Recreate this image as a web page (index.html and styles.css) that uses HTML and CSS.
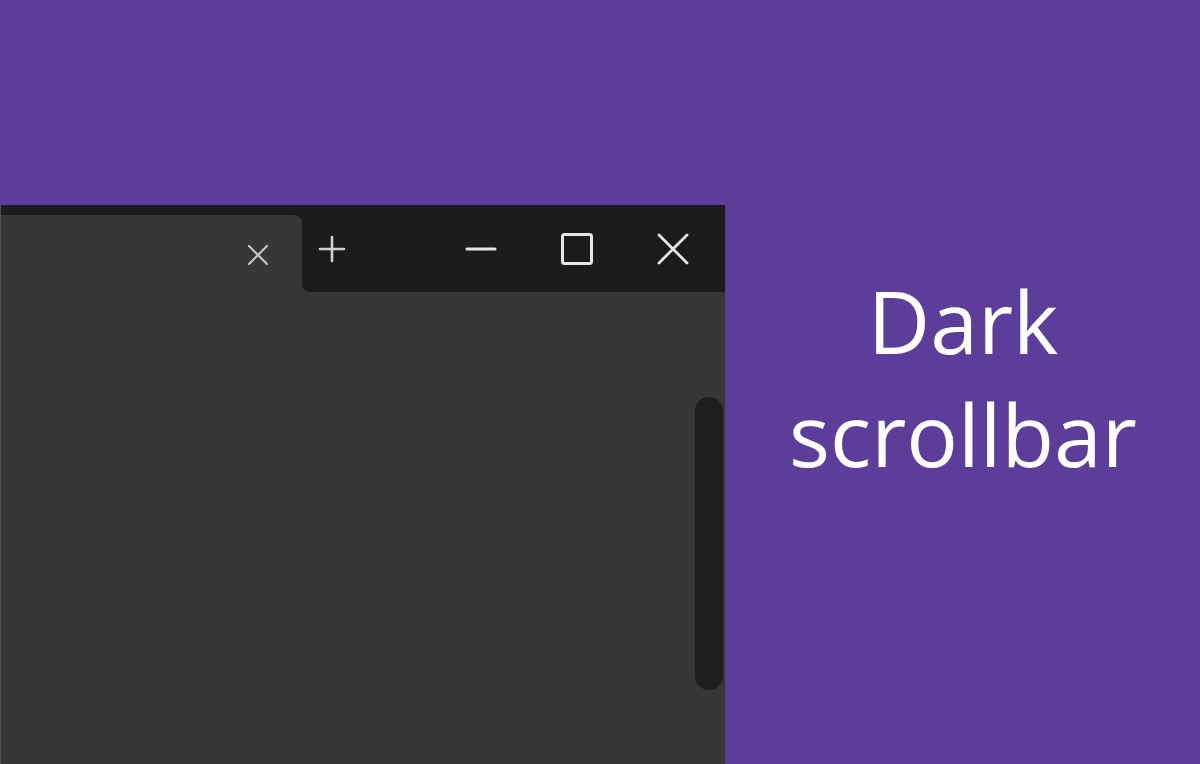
FILE: index.html
```html
<!DOCTYPE html>
<html lang="en">
<head>
    <meta charset="UTF-8">
    <title>Dark scrollbar</title>
    <link rel="stylesheet" href="styles.css">
</head>
<body>
    <div class="stage">
        <div class="window-col">
            <div class="window">
                <div class="tabstrip">
                    <div class="tab">
                        <button class="tab-close" title="Close tab">
                            <svg width="22" height="22" viewBox="0 0 22 22"><path d="M2 2L20 20M20 2L2 20" stroke="#c4c4c4" stroke-width="2.2" stroke-linecap="round"/></svg>
                        </button>
                    </div>
                    <button class="new-tab" title="New tab">
                        <svg width="28" height="28" viewBox="0 0 28 28"><path d="M14 2V26M2 14H26" stroke="#d2d2d2" stroke-width="2.6" stroke-linecap="round"/></svg>
                    </button>
                    <div class="spacer"></div>
                    <div class="controls">
                        <button class="ctrl" title="Minimize">
                            <svg width="32" height="32" viewBox="0 0 32 32"><path d="M2 16H30" stroke="#e6e6e6" stroke-width="3" stroke-linecap="round"/></svg>
                        </button>
                        <button class="ctrl" title="Maximize">
                            <svg width="34" height="34" viewBox="0 0 34 34"><rect x="2.5" y="2.5" width="29" height="29" rx="2" fill="none" stroke="#e6e6e6" stroke-width="3"/></svg>
                        </button>
                        <button class="ctrl" title="Close">
                            <svg width="32" height="32" viewBox="0 0 32 32"><path d="M2 2L30 30M30 2L2 30" stroke="#e6e6e6" stroke-width="2.8" stroke-linecap="round"/></svg>
                        </button>
                    </div>
                </div>
                <div class="page">
                    <div class="thumb"></div>
                </div>
            </div>
        </div>
        <div class="caption">
            <h1>Dark<br>scrollbar</h1>
        </div>
    </div>
</body>
</html>
```

FILE: styles.css
```css
body {
    margin: 0;
    background: #5c3d99;
    font-family: "Open Sans", "Noto Sans", sans-serif;
    overflow: hidden;
}
.stage {
    display: grid;
    grid-template-columns: 726px 1fr;
    height: 100vh;
}
.window-col {
    padding-top: 205px;
    display: flex;
    flex-direction: column;
}
.window {
    flex: 1;
    display: flex;
    flex-direction: column;
    border-left: 1px solid #505050;
    border-right: 1px solid #4a4a4a;
    background: #373737;
}
.tabstrip {
    height: 87px;
    display: flex;
    align-items: center;
    background: #1c1c1c;
}
button {
    background: none;
    border: none;
    padding: 0;
    cursor: pointer;
    display: flex;
    align-items: center;
    justify-content: center;
}
.tab {
    position: relative;
    align-self: flex-end;
    width: 301px;
    height: 77px;
    background: #373737;
    border-top-right-radius: 8px;
    display: flex;
    align-items: center;
    justify-content: flex-end;
    padding: 3px 33px 0 0;
    box-sizing: border-box;
}
/* inverse corner where the tab joins the page */
.tab::after {
    content: "";
    position: absolute;
    right: -8px;
    bottom: 0;
    width: 8px;
    height: 8px;
    background: radial-gradient(circle at 100% 0, #1c1c1c 7.5px, #373737 8.5px);
}
.new-tab {
    margin-left: 16px;
    margin-top: 1px;
}
.spacer {
    flex: 1;
}
.controls {
    display: flex;
    margin-right: 4px;
}
.ctrl {
    width: 96px;
    height: 60px;
}
.page {
    flex: 1;
    display: flex;
    justify-content: flex-end;
    align-items: flex-start;
    padding: 105px 2px 0 0;
}
.thumb {
    width: 28px;
    height: 293px;
    border-radius: 14px;
    background: #1e1e1e;
}
.caption {
    display: flex;
    align-items: center;
    justify-content: center;
    padding-bottom: 10px;
}
.caption h1 {
    margin: 0;
    color: #ffffff;
    font-size: 86px;
    font-weight: 400;
    line-height: 113px;
    text-align: center;
}
```
